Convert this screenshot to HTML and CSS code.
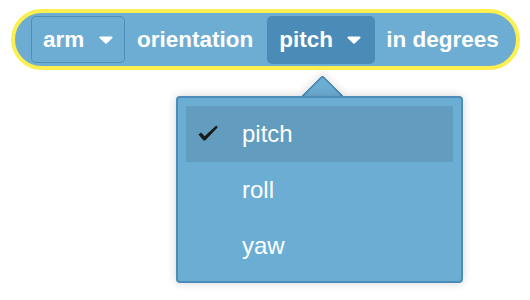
FILE: index.html
```html
<!DOCTYPE html>
<html>
<head>
<meta charset="utf-8">
<link rel="stylesheet" href="styles.css">
</head>
<body>
<div class="block">
  <div class="field field-outline">
    <span>arm</span>
    <svg class="caret" width="14" height="8" viewBox="0 0 14 8"><path d="M1.5 1.5 H12.5 L7 6.8 Z" fill="#fff" stroke="#fff" stroke-width="2" stroke-linejoin="round"/></svg>
  </div>
  <span class="label label-mid">orientation</span>
  <div class="field field-active">
    <span>pitch</span>
    <svg class="caret" width="14" height="8" viewBox="0 0 14 8"><path d="M1.5 1.5 H12.5 L7 6.8 Z" fill="#fff" stroke="#fff" stroke-width="2" stroke-linejoin="round"/></svg>
  </div>
  <span class="label label-end">in degrees</span>
</div>

<div class="menu">
  <div class="menu-arrow"></div>
  <div class="menu-body">
    <div class="item selected">
      <svg class="check" width="20" height="16" viewBox="0 0 20 16"><path d="M0.4 9.4 L3.2 7.4 L6.6 11.2 L18.2 0.6 L19.8 2.2 L7.2 15.4 L5.6 15.4 Z" fill="#1a1a1a"/></svg>
      <span>pitch</span>
    </div>
    <div class="item"><span>roll</span></div>
    <div class="item"><span>yaw</span></div>
  </div>
</div>
</body>
</html>
```

FILE: styles.css
```css
html, body {
  margin: 0;
  padding: 0;
  background: #ffffff;
}

body {
  width: 530px;
  height: 300px;
  position: relative;
  overflow: hidden;
  font-family: "Liberation Sans", Arial, sans-serif;
}

.block {
  box-sizing: border-box;
  margin: 9px 0 0 11px;
  width: 509px;
  height: 61px;
  border: 4px solid #fcef4f;
  border-radius: 31px;
  background: #6dadd3;
  display: flex;
  align-items: center;
  padding-left: 16px;
  color: #ffffff;
  font-weight: bold;
  font-size: 22.5px;
}

.field {
  box-sizing: border-box;
  height: 47px;
  border-radius: 5px;
  display: flex;
  align-items: center;
}

.field-outline {
  width: 94px;
  border: 1px solid #4f8dba;
  padding-left: 11px;
}

.field-outline .caret {
  margin-left: 15px;
}

.field-active {
  width: 108px;
  height: 48px;
  background: #4a8bb8;
  padding-left: 12px;
}

.field-active .caret {
  margin-left: 14px;
}

.label {
  margin-left: 12px;
  margin-right: 12px;
}

.label-mid {
  margin-right: 14px;
}

.label-end {
  margin-left: 11px;
}

.caret {
  display: block;
}

.menu {
  position: absolute;
  left: 176px;
  top: 96px;
  width: 287px;
  height: 187px;
}

.menu-body {
  position: relative;
  box-sizing: border-box;
  width: 100%;
  height: 100%;
  background: #6cadd3;
  border: 2px solid #4d8cb8;
  border-radius: 4px;
  box-shadow: 0 0 10px rgba(0, 0, 0, 0.18);
  padding: 8px;
}

.menu-arrow {
  position: absolute;
  left: 131px;
  top: -15px;
  width: 29px;
  height: 29px;
  background: #6cadd3;
  border-top: 2px solid #4d8cb8;
  border-left: 2px solid #4d8cb8;
  border-top-left-radius: 4px;
  transform: rotate(45deg);
  box-shadow: -3px -3px 6px rgba(0, 0, 0, 0.08);
}

.item {
  position: relative;
  height: 56px;
  display: flex;
  align-items: center;
  padding-left: 56px;
  color: #ffffff;
  font-size: 24px;
  z-index: 2;
}

.item.selected {
  background: #629cbe;
}

.check {
  position: absolute;
  left: 12px;
  top: 19px;
}
```
